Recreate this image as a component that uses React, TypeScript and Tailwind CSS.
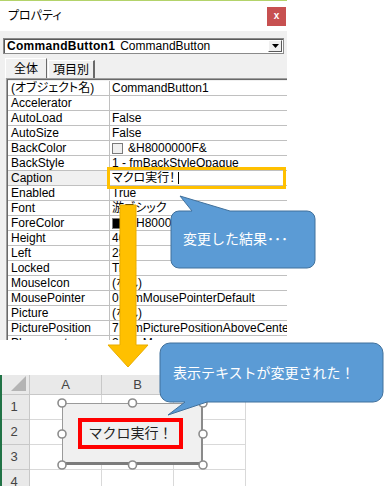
import React from 'react';

const rows = [
  { name: '(オブジェクト名)', value: 'CommandButton1', jp: true },
  { name: 'Accelerator', value: '' },
  { name: 'AutoLoad', value: 'False' },
  { name: 'AutoSize', value: 'False' },
  { name: 'BackColor', value: '&H8000000F&', swatch: 'bg-[#f0f0f0]' },
  { name: 'BackStyle', value: '1 - fmBackStyleOpaque' },
  { name: 'Caption', value: 'マクロ実行！', editing: true },
  { name: 'Enabled', value: 'True' },
  { name: 'Font', value: '游ゴシック' },
  { name: 'ForeColor', value: '&H80000012&', swatch: 'bg-black' },
  { name: 'Height', value: '40.5' },
  { name: 'Left', value: '28.5' },
  { name: 'Locked', value: 'True' },
  { name: 'MouseIcon', value: '(なし)' },
  { name: 'MousePointer', value: '0 - fmMousePointerDefault' },
  { name: 'Picture', value: '(なし)' },
  { name: 'PicturePosition', value: '7 - fmPicturePositionAboveCenter' },
  { name: 'Placement', value: '2 - fmMove' },
];

const PropertyPanel = () => (
  <div className="flex h-[340px] w-[287px] flex-col overflow-hidden">
    <div className="h-px shrink-0 bg-[#b3d36a]" />
    <div className="flex h-[30px] shrink-0 items-center bg-white">
      <span className="pl-2 text-[12px] [font-feature-settings:'palt']">プロパティ</span>
      <div className="ml-auto mr-px flex h-[19px] w-[19px] items-center justify-center bg-[#c75050] text-[10px] font-bold leading-none text-white">
        x
      </div>
    </div>
    <div className="flex min-h-0 flex-1 flex-col bg-[#f0f0f0] pt-[7px]">
      {/* object dropdown */}
      <div className="mx-[3px] flex h-[16px] shrink-0 items-center border border-[#8a8a8a] bg-white pl-[3px] text-[12px] leading-none shadow-[inset_1px_1px_0_#5a5a5a]">
        <span className="font-bold tracking-[0.3px]">CommandButton1</span>
        <span className="ml-[5px]">CommandButton</span>
        <div className="ml-auto mr-px flex h-[12px] w-[14px] items-center justify-center border border-b-[#5a5a5a] border-l-white border-r-[#5a5a5a] border-t-white bg-[#f0f0f0]">
          <svg width="7" height="4" viewBox="0 0 7 4">
            <polygon points="0,0 7,0 3.5,4" fill="#000" />
          </svg>
        </div>
      </div>
      {/* tabs */}
      <div className="mt-[4px] flex h-[20px] shrink-0 items-end pl-[5px] text-[12px]">
        <div className="flex h-[20px] w-[42px] items-center justify-center border-l border-r border-t border-l-white border-r-[#6a6a6a] border-t-white">
          全体
        </div>
        <div className="ml-px flex h-[18px] w-[47px] items-center justify-center border-l border-r-2 border-t border-l-white border-r-[#6a6a6a] border-t-white">
          項目別
        </div>
      </div>
      {/* grid */}
      <div className="ml-[6px] flex min-h-0 flex-1 overflow-hidden border-l border-t border-[#a0a0a0]">
        <div className="flex flex-1 flex-col border-l border-t border-[#696969] pt-px">
          {rows.map((r) => (
            <div key={r.name} className="flex h-[15px] shrink-0 text-[12px] leading-[14px]">
              <div
                className={`w-[102px] shrink-0 overflow-hidden whitespace-nowrap border-b border-r border-[#c0c0c0] pl-[3px] ${
                  r.editing ? 'bg-[#f0f0f0]' : 'bg-white'
                } ${r.jp ? "[font-feature-settings:'palt']" : ''}`}
              >
                {r.name}
              </div>
              <div className="flex flex-1 items-center overflow-hidden whitespace-nowrap border-b border-[#c0c0c0] bg-white pl-[2px] [font-feature-settings:'palt']">
                {r.swatch && <span className={`mr-[5px] inline-block h-[11px] w-[11px] shrink-0 border border-[#7a7a7a] ${r.swatch}`} />}
                {r.value}
                {r.editing && <span className="ml-[3px] inline-block h-[12px] w-px bg-black" />}
              </div>
            </div>
          ))}
        </div>
        <div className="w-[5px] border-l border-r-2 border-l-[#8a8a8a] border-r-[#6f6f6f] bg-[#e8e8e8]" />
      </div>
    </div>
  </div>
);

const Sheet = () => {
  const head = 'flex items-center justify-center border-b border-r border-[#c8c8c8] bg-[#e9e9e9] text-[13px] text-[#444]';
  const cell = 'border-b border-r border-[#d9d9d9] bg-white';
  return (
    <div className="relative h-[111px] w-[246px] overflow-hidden">
      <div className="grid grid-cols-[28px_72px_72px_72px] grid-rows-[20px_25px_25px_25px_25px] border-l-2 border-[#217346]">
        <div className="flex items-end justify-end border-b border-r border-[#c8c8c8] bg-[#e9e9e9] pb-[3px] pr-[3px]">
          <svg width="15" height="15" viewBox="0 0 15 15">
            <polygon points="15,0 15,15 0,15" fill="#b4b4b4" />
          </svg>
        </div>
        <div className={head}>A</div>
        <div className={head}>B</div>
        <div className={head}>C</div>
        {['1', '2', '3', '4'].map((n) => (
          <React.Fragment key={n}>
            <div className={`${head} pr-[3px]`}>{n}</div>
            <div className={cell} />
            <div className={cell} />
            <div className={cell} />
          </React.Fragment>
        ))}
      </div>
      {/* command button sitting on the sheet */}
      <div className="absolute left-[62px] top-[28px] flex h-[62px] w-[141px] items-center justify-center border border-b-[3px] border-r-2 border-[#9a9a9a] border-b-[#7c7c7c] border-r-[#8a8a8a] bg-[#f0f0f0]">
        <div className="mr-[3px] flex h-[31px] w-[105px] items-center justify-center border-4 border-[#ff0000] text-[14px] text-[#222]">
          マクロ実行！
        </div>
      </div>
      <svg className="absolute left-[56px] top-[22px]" width="153" height="74" viewBox="0 0 153 74">
        {[
          [6, 6], [76.5, 6], [147, 6], [6, 37], [147, 37], [6, 68], [76.5, 68], [147, 68],
        ].map(([cx, cy]) => (
          <circle key={`${cx}-${cy}`} cx={cx} cy={cy} r="4" fill="#fff" stroke="#8c8c8c" strokeWidth="1.6" />
        ))}
      </svg>
    </div>
  );
};

export default function App() {
  return (
    <div className="relative h-[486px] w-[389px] overflow-hidden bg-white font-['Liberation_Sans','Noto_Sans_CJK_JP',sans-serif] text-black">
      <PropertyPanel />
      <div className="h-[35px]" />
      <Sheet />

      {/* highlight on the Caption value */}
      <div className="absolute left-[107px] top-[167px] h-[22px] w-[179px] border-[3px] border-[#ffc000]" />

      {/* arrow down to the sheet */}
      <svg className="absolute left-[105px] top-[203px]" width="46" height="166" viewBox="0 0 46 166">
        <polygon points="15,2 31,2 31,142 43,142 23,164 3,142 15,142" fill="#ffc000" stroke="#e9ad00" strokeWidth="1" />
      </svg>

      {/* callout: 変更した結果 */}
      <svg className="absolute left-[165px] top-[190px]" width="156" height="84" viewBox="0 0 156 84">
        <path
          d="M14 21 L27 21 L15 6 L65 21 L142 21 A8 8 0 0 1 150 29 L150 70 A8 8 0 0 1 142 78 L14 78 A8 8 0 0 1 6 70 L6 29 A8 8 0 0 1 14 21 Z"
          fill="#5b9bd5"
          stroke="#41719c"
          strokeWidth="1"
        />
      </svg>
      <div className="absolute left-[183px] top-[229px] text-[14px] leading-[20px] text-white">変更した結果･･･</div>

      {/* callout: 表示テキストが変更された */}
      <svg className="absolute left-[155px] top-[338px]" width="232" height="82" viewBox="0 0 232 82">
        <path
          d="M15 5 L218 5 A10 10 0 0 1 228 15 L228 54 A10 10 0 0 1 218 64 L52 64 L13 77 L30 64 L15 64 A10 10 0 0 1 5 54 L5 15 A10 10 0 0 1 15 5 Z"
          fill="#5b9bd5"
          stroke="#41719c"
          strokeWidth="1"
        />
      </svg>
      <div className="absolute left-[173px] top-[363px] text-[14px] leading-[20px] text-white">表示テキストが変更された！</div>
    </div>
  );
}
